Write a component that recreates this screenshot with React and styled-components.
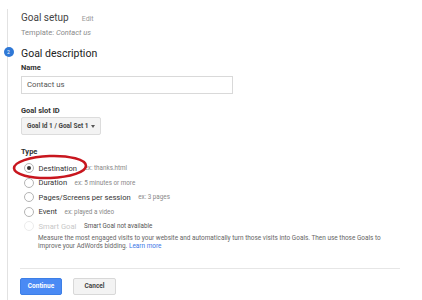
import React from 'react';
import styled, { createGlobalStyle } from 'styled-components';

const GlobalStyle = createGlobalStyle`
  body {
    margin: 0;
    background: #fff;
    font-family: Roboto, "Liberation Sans", Arial, sans-serif;
  }
`;

// Page and the step rail on the left
const Page = styled.div`
  width: 422px;
  height: 300px;
  overflow: hidden;
  padding: 9px 0 0 7px;
  box-sizing: border-box;
`;

const Rail = styled.div`
  height: 100%;
  border-left: 1px solid #e2e2e2;
  padding: 2px 0 0 13px;
  box-sizing: border-box;
  display: flex;
  flex-direction: column;
  align-items: flex-start;
`;

const SetupRow = styled.div`
  display: flex;
  align-items: baseline;
  gap: 13px;
  height: 14px;
  line-height: 14px;
`;

const SetupTitle = styled.span`
  font-size: 10px;
  color: #444;
`;

const EditLink = styled.span`
  font-size: 7px;
  color: #999;
`;

const Template = styled.div`
  margin-top: 3px;
  font-size: 7.5px;
  line-height: 10px;
  color: #8a8a8a;

  em {
    font-style: italic;
  }
`;

const Heading = styled.div`
  position: relative;
  margin-top: 9px;
  font-size: 10.5px;
  line-height: 14px;
  color: #222;
`;

const StepBadge = styled.span`
  position: absolute;
  left: -17.5px;
  top: 0px;
  width: 10px;
  height: 10px;
  border-radius: 50%;
  background: #2f78d6;
  color: #fff;
  font-size: 5px;
  line-height: 10px;
  text-align: center;
`;

const Label = styled.div`
  margin-top: ${(p) => p.$top}px;
  font-size: 7.5px;
  font-weight: 700;
  line-height: 10px;
  color: #333;
`;

const TextInput = styled.div`
  margin-top: 3px;
  width: 212px;
  height: 18px;
  box-sizing: border-box;
  border: 1px solid #d9d9d9;
  padding-left: 5px;
  font-size: 7.8px;
  line-height: 16px;
  color: #555;
`;

const Select = styled.div`
  margin-top: 1px;
  width: 80px;
  height: 18px;
  box-sizing: border-box;
  border: 1px solid #dcdcdc;
  border-radius: 2px;
  background: #f3f3f3;
  padding: 0 5px;
  display: flex;
  align-items: center;
  justify-content: space-between;
  font-size: 6.5px;
  font-weight: 700;
  color: #444;
`;

const Caret = styled.span`
  width: 0;
  height: 0;
  border-left: 2.5px solid transparent;
  border-right: 2.5px solid transparent;
  border-top: 3px solid #555;
`;

const RadioList = styled.div`
  margin-top: 4px;
  display: flex;
  flex-direction: column;
`;

const RadioRow = styled.div`
  position: relative;
  height: 14.5px;
  display: flex;
  align-items: center;
  padding-left: 2.5px;
`;

const Radio = styled.span`
  width: 10px;
  height: 10px;
  box-sizing: border-box;
  border-radius: 50%;
  border: 1px solid ${(p) => (p.$disabled ? '#ececec' : '#b4b4b4')};
  background: #fff;
  display: flex;
  align-items: center;
  justify-content: center;
  margin-right: 5px;

  &::after {
    content: '';
    width: 4px;
    height: 4px;
    border-radius: 50%;
    background: ${(p) => (p.$checked ? '#333' : 'transparent')};
  }
`;

const RadioLabel = styled.span`
  font-size: 7.6px;
  color: ${(p) => (p.$disabled ? '#c8c8c8' : '#333')};
`;

const Hint = styled.span`
  margin-left: 7.5px;
  font-size: 6.3px;
  color: ${(p) => (p.$dark ? '#555' : '#888')};
`;

const Highlight = styled.svg`
  position: absolute;
  left: -9px;
  top: -7px;
  pointer-events: none;
`;

const Description = styled.div`
  padding-left: 17px;
  font-size: 6.45px;
  line-height: 8.6px;
  color: #666;
  white-space: nowrap;

  a {
    color: #3b78e7;
    text-decoration: none;
  }
`;

const Divider = styled.div`
  margin: 17px 0 0 -1px;
  width: 380px;
  height: 1px;
  background: #e6e6e6;
`;

const Actions = styled.div`
  margin: 9px 0 0 -1px;
  display: flex;
  gap: 11px;
`;

const Button = styled.button`
  width: ${(p) => p.$width}px;
  height: 17px;
  padding: 0;
  border-radius: 2px;
  border: 1px solid ${(p) => (p.$primary ? '#3d7fe6' : '#d8d8d8')};
  background: ${(p) => (p.$primary ? '#4a8af4' : '#f3f3f3')};
  color: ${(p) => (p.$primary ? '#fff' : '#444')};
  font-family: inherit;
  font-size: 6.5px;
  font-weight: 700;
`;

const goalTypes = [
  { name: 'Destination', hint: 'ex: thanks.html', checked: true },
  { name: 'Duration', hint: 'ex: 5 minutes or more' },
  { name: 'Pages/Screens per session', hint: 'ex: 3 pages' },
  { name: 'Event', hint: 'ex: played a video' },
  { name: 'Smart Goal', hint: 'Smart Goal not available', disabled: true },
];

function App() {
  return (
    <Page>
      <GlobalStyle />
      <Rail>
        <SetupRow>
          <SetupTitle>Goal setup</SetupTitle>
          <EditLink>Edit</EditLink>
        </SetupRow>
        <Template>
          Template: <em>Contact us</em>
        </Template>

        <Heading>
          <StepBadge>2</StepBadge>
          Goal description
        </Heading>
        <Label $top={2}>Name</Label>
        <TextInput>Contact us</TextInput>

        <Label $top={12}>Goal slot ID</Label>
        <Select>
          Goal Id 1 / Goal Set 1
          <Caret />
        </Select>

        <Label $top={12}>Type</Label>
        <RadioList>
          {goalTypes.map((t) => (
            <RadioRow key={t.name}>
              <Radio $checked={t.checked} $disabled={t.disabled} />
              <RadioLabel $disabled={t.disabled}>{t.name}</RadioLabel>
              <Hint $dark={t.disabled}>{t.hint}</Hint>
              {t.checked && (
                <Highlight width="76" height="26" viewBox="0 0 76 26">
                  <ellipse
                    cx="38"
                    cy="13"
                    rx="36"
                    ry="11"
                    fill="none"
                    stroke="#c8161e"
                    strokeWidth="2.6"
                    transform="rotate(-2 38 13)"
                  />
                </Highlight>
              )}
            </RadioRow>
          ))}
          <Description>
            Measure the most engaged visits to your website and automatically turn those visits into Goals. Then use those Goals to
            <br />
            improve your AdWords bidding. <a href="#">Learn more</a>
          </Description>
        </RadioList>

        <Divider />
        <Actions>
          <Button $primary $width={42}>Continue</Button>
          <Button $width={43}>Cancel</Button>
        </Actions>
      </Rail>
    </Page>
  );
}

export default App;
